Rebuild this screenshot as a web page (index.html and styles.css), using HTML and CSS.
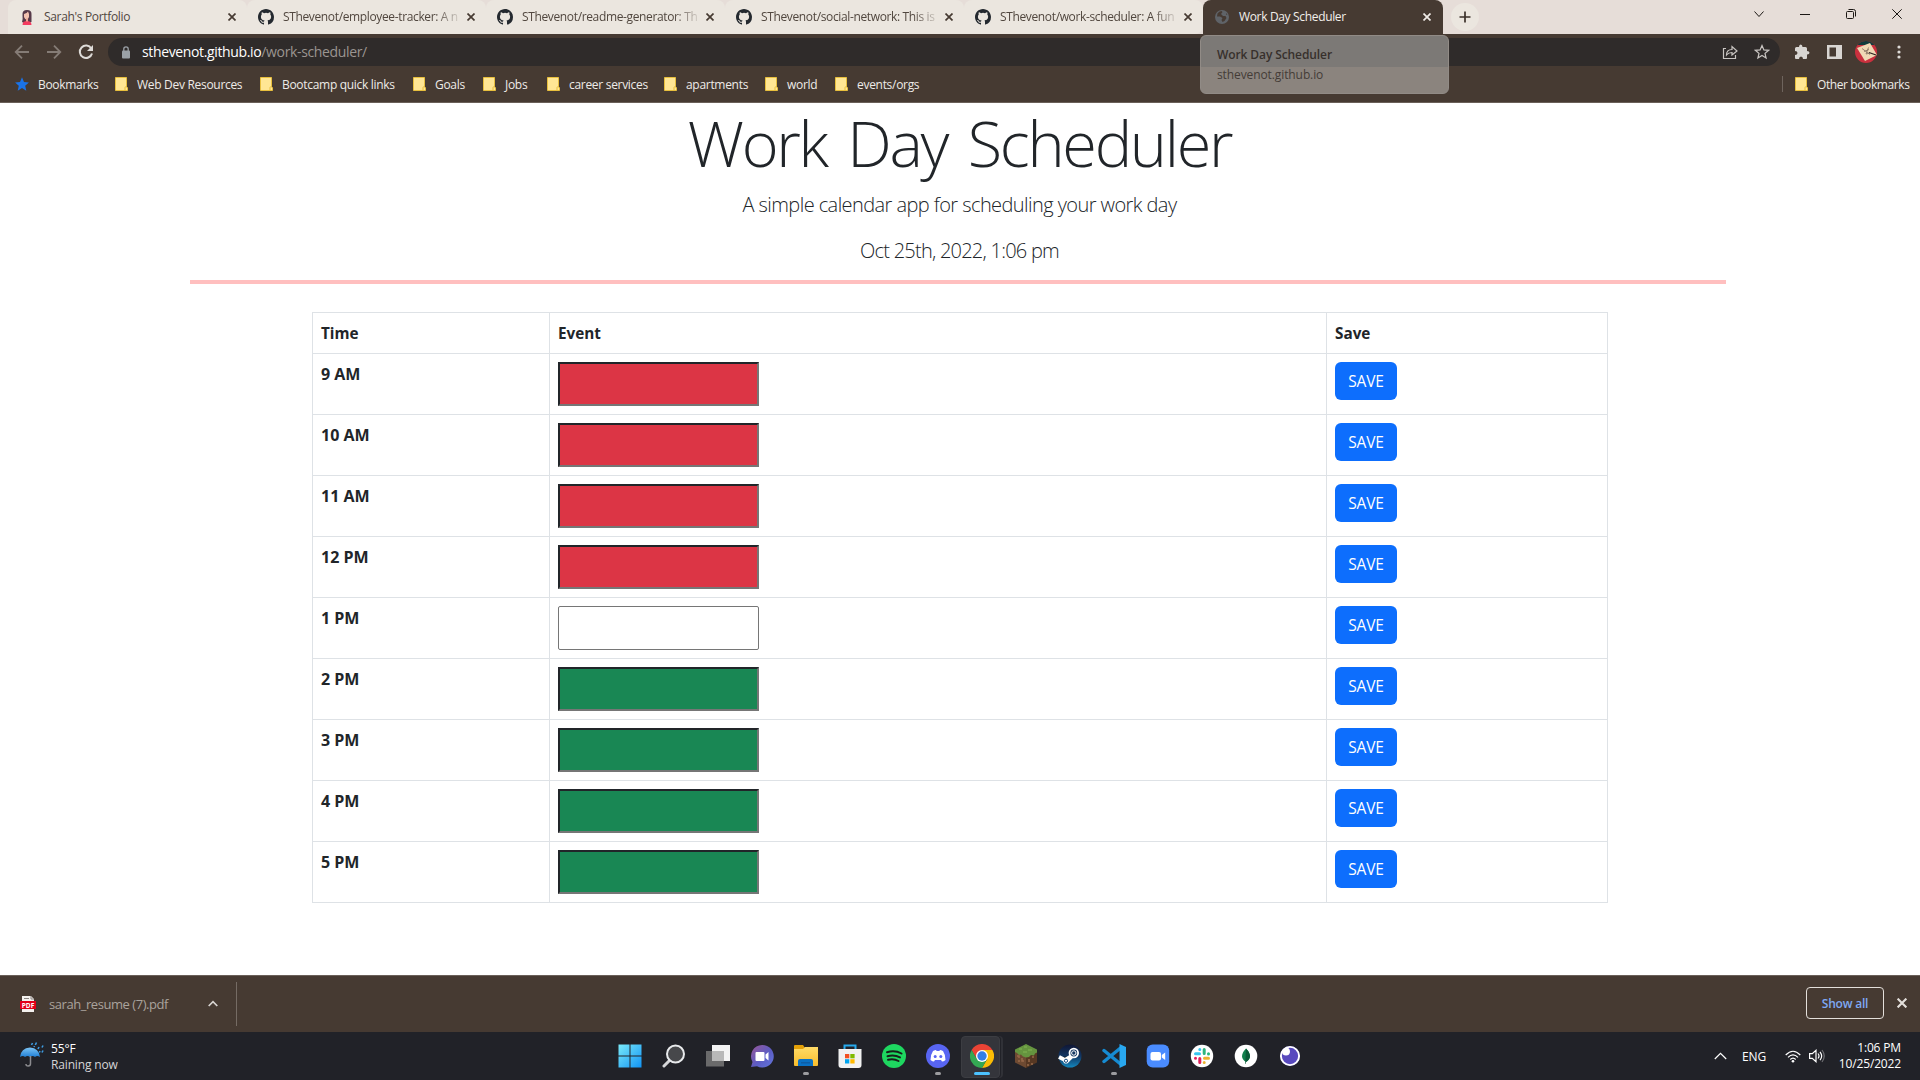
FILE: index.html
```html
<!DOCTYPE html>
<html lang="en">
<head>
<meta charset="utf-8">
<title>Work Day Scheduler</title>
<link rel="stylesheet" href="styles.css">
</head>
<body>
<svg class="defs" width="0" height="0">
  <symbol id="github" viewBox="0 0 16 16"><path fill="#24292f" d="M8 0C3.58 0 0 3.58 0 8c0 3.54 2.29 6.53 5.47 7.59.4.07.55-.17.55-.38 0-.19-.01-.82-.01-1.49-2.01.37-2.53-.49-2.69-.94-.09-.23-.48-.94-.82-1.13-.28-.15-.68-.52-.01-.53.63-.01 1.08.58 1.23.82.72 1.21 1.87.87 2.33.66.07-.52.28-.87.51-1.07-1.78-.2-3.64-.89-3.64-3.95 0-.87.31-1.59.82-2.15-.08-.2-.36-1.02.08-2.12 0 0 .67-.21 2.2.82a7.6 7.6 0 0 1 4 0c1.53-1.04 2.2-.82 2.2-.82.44 1.1.16 1.92.08 2.12.51.56.82 1.27.82 2.15 0 3.07-1.87 3.75-3.65 3.95.29.25.54.73.54 1.48 0 1.07-.01 1.93-.01 2.2 0 .21.15.46.55.38A8 8 0 0 0 16 8c0-4.42-3.58-8-8-8z"/></symbol>
  <symbol id="close" viewBox="0 0 8 8"><path d="M.5.5l7 7M7.500.5l-7 7" stroke="currentColor" stroke-width="1.7" fill="none"/></symbol>
  <symbol id="folder" viewBox="0 0 13 14"><path d="M.5.5h11v9.300l1 1v2.700H.5z" fill="#ffe694" stroke="#e8bf3d"/><path d="M10 13V10.500q0-.7.7-.7h1.100" fill="none" stroke="#e8bf3d"/></symbol>
</svg>

<header class="chrome">
  <div class="tabstrip">
    <div class="tab first"><svg class="fav" viewBox="0 0 16 16"><path d="M3 13q1-3 .5-7Q3 1 8 1t4.500 5v7l-3 1H5z" fill="#573a4a"/><path d="M5 5q3-1 4-2.500l1 2.500v3q-1 2.500-2.500 2.500T5 8z" fill="#f3c2b0"/><path d="M3.500 16q0-4 4.500-4t4.500 4z" fill="#f43b60"/><path d="M7 9.500h2v3H7z" fill="#e9a594"/></svg><span class="tab-title">Sarah's Portfolio</span><svg class="x"><use href="#close"/></svg></div>
    <div class="tab"><svg class="fav"><use href="#github"/></svg><span class="tab-title long">SThevenot/employee-tracker: A n</span><svg class="x"><use href="#close"/></svg></div>
    <div class="tab"><svg class="fav"><use href="#github"/></svg><span class="tab-title long">SThevenot/readme-generator: Th</span><svg class="x"><use href="#close"/></svg></div>
    <div class="tab"><svg class="fav"><use href="#github"/></svg><span class="tab-title long">SThevenot/social-network: This is</span><svg class="x"><use href="#close"/></svg></div>
    <div class="tab last"><svg class="fav"><use href="#github"/></svg><span class="tab-title long">SThevenot/work-scheduler: A fun</span><svg class="x"><use href="#close"/></svg></div>
    <div class="tab active"><svg class="fav" viewBox="0 0 16 16"><circle cx="8" cy="8" r="7" fill="#5f6368"/><path d="M3.500 4.500q1.500-2.500 4-2.500l1 1-1.500 2 2 2h2.500l1 2-2 3-2 1-1-2 1-2-2.500-1.500H3zM12 4l1.500 2-1.500-.5z" fill="#463a32"/></svg><span class="tab-title">Work Day Scheduler</span><svg class="x"><use href="#close"/></svg></div>
    <div class="newtab"><svg width="12" height="12" viewBox="0 0 12 12"><path d="M6 .5v11M.5 6h11" stroke="#3b302a" stroke-width="1.700"/></svg></div>
    <div class="wincontrols">
      <svg width="10" height="10" viewBox="0 0 10 10"><path d="M.5 2.500L5 7.500l4.500-5"/></svg>
      <svg width="10" height="10" viewBox="0 0 10 10"><path d="M0 5.500h10"/></svg>
      <svg width="10" height="10" viewBox="0 0 10 10"><rect x=".5" y="2.500" width="7" height="7" rx="1"/><path d="M2.500.5h5q2 0 2 2v5"/></svg>
      <svg width="10" height="10" viewBox="0 0 10 10"><path d="M.3.3l9.400 9.400M9.700.3L.3 9.700"/></svg>
    </div>
  </div>

  <div class="toolbar">
    <div class="nav">
      <svg width="16" height="16" viewBox="0 0 16 16" class="dim"><path d="M15 8H2M8 1.700L1.700 8 8 14.300"/></svg>
      <svg width="16" height="16" viewBox="0 0 16 16" class="dim"><path d="M1 8h13M8 1.700L14.300 8 8 14.300"/></svg>
      <svg width="16" height="16" viewBox="0 0 16 16"><path d="M13.300 4.500A6.200 6.200 0 1 0 14 9.500" stroke-width="2"/><path d="M15 1v6H9z" fill="#dedbd8" stroke="none"/></svg>
    </div>
    <div class="omnibox">
      <svg width="10" height="13" viewBox="0 0 10 13"><rect x="1" y="4.500" width="8" height="8" rx="1" fill="#9aa0a6"/><path d="M2.800 5V3a2.200 2.200 0 0 1 4.400 0v2" fill="none" stroke="#9aa0a6" stroke-width="1.300"/></svg>
      <div class="url"><b>sthevenot.github.io</b>/work-scheduler/</div>
      <svg class="share" width="16" height="16" viewBox="0 0 16 16"><path d="M4 4.500H1.500v10h12V11M4.500 11q0-5.500 5.500-5.500V2.500L15 7l-5 4V8.500q-3.500 0-5.500 2.500z"/></svg>
      <svg class="star" width="16" height="16" viewBox="0 0 16 16"><path d="M8 1.500l1.900 4.400 4.700.4-3.600 3.100 1.100 4.600L8 11.500 3.900 14 5 9.400 1.400 6.300l4.700-.4z"/></svg>
    </div>
    <svg class="puzzle" width="16" height="16" viewBox="0 0 16 16"><path fill="#d8d5d2" d="M1 4.500q0-1.500 1.500-1.500H5Q5 .5 6.700.5T8.500 3h3q1.500 0 1.500 1.500V7q2.500 0 2.500 1.800T13 10.500V14q0 1-1 1H9q0-2.500-2-2.500T5 15H2q-1 0-1-1v-3q2.500 0 2.500-2T1 7z"/></svg>
    <svg class="panel" width="15" height="14" viewBox="0 0 15 14"><path fill="#d8d5d2" fill-rule="evenodd" d="M0 0h15v14H0zM2.500 2.500v9H9v-9z"/></svg>
    <svg class="avatar" width="22" height="22" viewBox="0 0 22 22"><clipPath id="av"><circle cx="11" cy="11" r="11"/></clipPath><g clip-path="url(#av)"><path fill="#c9303e" d="M0 0h22v22H0z"/><path fill="#123c3c" d="M3 0h16v4H3z"/><path fill="#f0d9b5" d="M2 7L15 2l7 12-12 6z"/><path d="M7 7.500l8 6M13.500 6.500L11 13M9 10.500l5-2M11 13l4-1" stroke="#8d7866" stroke-width=".9" fill="none"/><path d="M14 11.500l7 2.500" stroke="#2c2422" stroke-width="1.300"/></g></svg>
    <svg class="dots" width="4" height="14" viewBox="0 0 4 14" fill="#dedbd8"><circle cx="2" cy="2" r="1.600"/><circle cx="2" cy="7" r="1.600"/><circle cx="2" cy="12" r="1.600"/></svg>
  </div>

  <div class="bookmarks">
    <span class="bm b0"><svg width="14" height="14" viewBox="0 0 14 14"><path fill="#1a73e8" d="M7 .3l2 4.700 4.900.4-3.700 3.300 1.100 5L7 11.100l-4.300 2.600 1.100-5L.1 5.400 5 5z"/></svg>Bookmarks</span>
    <span class="bm b1"><svg><use href="#folder"/></svg>Web Dev Resources</span>
    <span class="bm b2"><svg><use href="#folder"/></svg>Bootcamp quick links</span>
    <span class="bm b3"><svg><use href="#folder"/></svg>Goals</span>
    <span class="bm b4"><svg><use href="#folder"/></svg>Jobs</span>
    <span class="bm b5"><svg><use href="#folder"/></svg>career services</span>
    <span class="bm b6"><svg><use href="#folder"/></svg>apartments</span>
    <span class="bm b7"><svg><use href="#folder"/></svg>world</span>
    <span class="bm b8"><svg><use href="#folder"/></svg>events/orgs</span>
    <span class="bm other"><svg><use href="#folder"/></svg>Other bookmarks</span>
  </div>
  <div class="tooltip"><b>Work Day Scheduler</b><span>sthevenot.github.io</span></div>
</header>

<main class="page">
  <section class="jumbotron">
    <h1>Work Day Scheduler</h1>
    <p class="lead">A simple calendar app for scheduling your work day</p>
    <p class="lead date">Oct 25th, 2022, 1:06 pm</p>
  </section>
  <table class="schedule">
    <thead><tr><th class="time">Time</th><th class="event">Event</th><th>Save</th></tr></thead>
    <tbody>
      <tr><th>9 AM</th><td><input class="past"></td><td><button>SAVE</button></td></tr>
      <tr><th>10 AM</th><td><input class="past"></td><td><button>SAVE</button></td></tr>
      <tr><th>11 AM</th><td><input class="past"></td><td><button>SAVE</button></td></tr>
      <tr><th>12 PM</th><td><input class="past"></td><td><button>SAVE</button></td></tr>
      <tr><th>1 PM</th><td><input class="present"></td><td><button>SAVE</button></td></tr>
      <tr><th>2 PM</th><td><input class="future"></td><td><button>SAVE</button></td></tr>
      <tr><th>3 PM</th><td><input class="future"></td><td><button>SAVE</button></td></tr>
      <tr><th>4 PM</th><td><input class="future"></td><td><button>SAVE</button></td></tr>
      <tr><th>5 PM</th><td><input class="future"></td><td><button>SAVE</button></td></tr>
    </tbody>
  </table>
</main>

<section class="downloads">
  <div class="file">
    <svg width="16" height="16" viewBox="0 0 16 16"><path d="M2 0h9l3 3v13H2z" fill="#f3f0ee"/><path d="M11 0v3h3M4 2.500h5" stroke="#8a8380" fill="none"/><path d="M0 5h16v8H0z" fill="#e2001a"/><text class="pdf" x="8" y="11.500" text-anchor="middle">PDF</text></svg>
    <span>sarah_resume (7).pdf</span>
    <svg class="chev" width="10" height="7" viewBox="0 0 10 7"><path d="M.7 6L5 1.700 9.300 6" fill="none" stroke="#d8d5d2" stroke-width="1.700"/></svg>
  </div>
  <div class="showall">Show all</div>
  <svg class="dismiss" width="10" height="10" viewBox="0 0 8 8"><use href="#close"/></svg>
</section>

<footer class="taskbar">
  <div class="weather">
    <svg width="24" height="26" viewBox="0 0 24 26"><defs><linearGradient id="um" x2="0" y2="1"><stop stop-color="#7cc4f5"/><stop offset="1" stop-color="#1f7fd6"/></linearGradient></defs><path d="M0 15Q1 6 10 5.500 19 6 20 15q-3-2-5 0-2.500-2-5 0-2.500-2-5 0-2-2-5 0z" fill="url(#um)"/><path d="M10.500 14v7.500q0 2.500-2.300 2.500T6 22" stroke="#8b8b8f" stroke-width="1.500" fill="none"/><path d="M12.500 1l-1 2M16.500.5l-1.200 2.500M19 5l-1 2M23 3.500l-1 2M23 8.500l-1 2M20 9l-.7 1.500M14.500 4l-.5 1" stroke="#3d9be0" stroke-width="1.600"/></svg>
    <div><b>55°F</b><span>Raining now</span></div>
  </div>
  <div class="apps">
    <span><svg viewBox="0 0 24 24"><defs><linearGradient id="win" gradientUnits="userSpaceOnUse" x2="24" y2="24"><stop stop-color="#7cecfa"/><stop offset="1" stop-color="#0f92f5"/></linearGradient></defs><path fill="url(#win)" d="M.5.5h11v11H.5zM12.500.5h11v11h-11zM.5 12.500h11v11H.5zM12.500 12.500h11v11h-11z"/></svg></span>
    <span><svg viewBox="0 0 24 24"><path d="M8.500 15.500L2 22" stroke="#d5d7d9" stroke-width="3" stroke-linecap="round"/><circle cx="13.500" cy="10" r="8.500" fill="#47484b" stroke="#e8eaec" stroke-width="2"/></svg></span>
    <span><svg viewBox="0 0 24 24"><path fill="#f3f3f3" d="M6 1h18v16H6z"/><path fill="#777" fill-opacity=".85" d="M0 7h18v15.500H0z"/><path fill="#b8b8b8" d="M6 7h12v10H6z"/></svg></span>
    <span><svg viewBox="0 0 24 24"><defs><linearGradient id="tm" x2="1" y2="1"><stop stop-color="#9a5797"/><stop offset=".55" stop-color="#5b5cc4"/><stop offset="1" stop-color="#6478dd"/></linearGradient></defs><path fill="url(#tm)" d="M12 1a11.300 11.300 0 1 1-5 21.200L1 23l1.500-5A11.300 11.300 0 0 1 12 1z"/><rect x="5.500" y="8" width="9" height="9" rx="1" fill="#fff"/><path fill="#fff" d="M15.500 10.500l3-2.500v8.500l-3-2.500z"/></svg></span>
    <span class="run"><svg viewBox="0 0 24 24"><defs><linearGradient id="fo" x2="0" y2="1"><stop stop-color="#ffdb67"/><stop offset="1" stop-color="#f8bd2c"/></linearGradient></defs><path fill="#e3a008" d="M0 2q0-1 1-1h8l2 3v4H0z"/><path fill="url(#fo)" d="M0 5h9l2-2h13v18q0 1-1 1H1q-1 0-1-1z"/><path fill="#0a71c4" d="M4 22v-5q0-2 2-2h11q2 0 2 2v5z"/><path fill="#0d5da5" d="M7 18h9v1.500H7z"/></svg></span>
    <span><svg viewBox="0 0 24 24"><path d="M6.500 7V1.500h11V7" fill="none" stroke="#27a9ec" stroke-width="2"/><path fill="#f1f1f1" d="M.5 5h23v16q0 3-3 3h-17q-3 0-3-3z"/><path fill="#f25022" d="M7 10h4.300v4.300H7z"/><path fill="#7fba00" d="M12.300 10h4.300v4.300h-4.300z"/><path fill="#00a4ef" d="M7 15.200h4.300v4.300H7z"/><path fill="#ffb900" d="M12.300 15.200h4.300v4.300h-4.300z"/></svg></span>
    <span><svg viewBox="0 0 24 24"><circle cx="12" cy="12" r="12" fill="#1ed760"/><path d="M5 8.200q8-2.300 14.500 1.300M5.500 12.200q7-1.700 12.500 1.200M6 15.800q6-1.300 10.500 1.200" fill="none" stroke="#17201a" stroke-width="2" stroke-linecap="round"/></svg></span>
    <span class="run"><svg viewBox="0 0 24 24"><circle cx="12" cy="12" r="12" fill="#5865f2"/><path fill="#fff" d="M7 7q2-1 3-1l.6 1h2.800l.6-1q1 0 3 1 2.700 4 2.500 9-2 1.500-3.500 1.500l-1-1.500H9l-1 1.500q-1.500 0-3.500-1.500Q4.300 11 7 7z"/><circle cx="9.200" cy="12.500" r="1.500" fill="#5865f2"/><circle cx="14.800" cy="12.500" r="1.500" fill="#5865f2"/></svg></span>
    <span class="current"><svg viewBox="0 0 24 24"><path fill="#ea4335" d="M1.600 6A12 12 0 0 1 22.400 6H12L6.800 15z"/><path fill="#fbbc05" d="M22.400 6A12 12 0 0 1 12 24l5.200-9L12 6z"/><path fill="#34a853" d="M1.600 6A12 12 0 0 0 12 24l5.200-9H6.800z"/><circle cx="12" cy="12" r="6" fill="#fff"/><circle cx="12" cy="12" r="4.700" fill="#337ee8"/></svg></span>
    <span><svg viewBox="0 0 24 24"><path fill="#6e4a32" d="M1 6l11 5v13L1 18.500z"/><path fill="#573823" d="M23 6l-11 5v13l11-5.500z"/><path fill="#65943f" d="M12 0l11 5.500v3l-2 1-1 2-3-.5-2 2-3 .5-3-1-2-2-2 .5-2-2-2-1V5.500z"/><path d="M5 5h3M10 3h3M14 6h4M9 8h4" stroke="#82b453"/><path d="M3 12h2v2M8 14v3h2M4 17h2M15 15v3M18 13h2M17 20h2M14 20v2" stroke="#98694a" fill="none" stroke-width="1.500"/></svg></span>
    <span><svg viewBox="0 0 24 24"><defs><linearGradient id="st" x2="0" y2="1"><stop stop-color="#101634"/><stop offset=".5" stop-color="#123663"/><stop offset="1" stop-color="#1487bd"/></linearGradient></defs><circle cx="12" cy="12" r="11.500" fill="url(#st)"/><path d="M1 13l6 3 6-3.500M9 17l5-5" stroke="#fff" stroke-width="4"/><circle cx="15.800" cy="9" r="4.300" fill="#173a64" stroke="#fff" stroke-width="1.800"/><circle cx="15.800" cy="9" r="2.200" fill="none" stroke="#fff"/><circle cx="8" cy="16.800" r="2.800" fill="#fff"/><circle cx="8" cy="16.800" r="1.600" fill="none" stroke="#1a4e81"/></svg></span>
    <span class="run"><svg viewBox="0 0 24 24"><path d="M2 6.500L18.500 20M2 17.500L18.500 4" stroke="#168bd2" stroke-width="3.400" stroke-linecap="round"/><path fill="#29a8f0" d="M17.500 0L24 3v18l-6.500 3z"/></svg></span>
    <span><svg viewBox="0 0 24 24"><rect x=".7" y=".5" width="22.500" height="23" rx="6" fill="#4a8cff"/><rect x="4.500" y="8" width="10.500" height="8.500" rx="2" fill="#fff"/><path fill="#fff" d="M15.800 11l3.400-2.500v7.500l-3.400-2.500z"/></svg></span>
    <span><svg viewBox="0 0 24 24"><circle cx="12" cy="12" r="11.200" fill="#fff"/><g fill="none" stroke-width="3" stroke-linecap="round"><path stroke="#36c5f0" d="M5.500 9.800h4M9.800 5.500v.1"/><path stroke="#2eb67d" d="M14.200 5.500v4M18.500 9.800v.1"/><path stroke="#ecb22e" d="M14.500 14.200h4M14.200 18.500v.1"/><path stroke="#e01e5a" d="M9.800 14.500v4M5.500 14.200v.1"/></g></svg></span>
    <span><svg viewBox="0 0 24 24"><circle cx="12" cy="12" r="11.300" fill="#fff"/><path fill="#10804c" d="M12 4.500q8 8.500 0 13.500-8-5 0-13.500z"/><path fill="#0b5b38" d="M12 4.500q8 8.500 0 13.500v1.800h-.7V18z"/></svg></span>
    <span><svg viewBox="0 0 24 24"><circle cx="12" cy="12" r="9.900" fill="#5849be"/><path fill="#fff" d="M4 8.500Q6 4 9 3.500q3 .5 3 4.500-.5 3.500-4 3.500T4 8.500z"/><circle cx="12" cy="12" r="9.100" fill="none" stroke="#fff" stroke-width="1.900"/></svg></span>
  </div>
  <div class="tray">
    <svg class="up" width="13" height="8" viewBox="0 0 13 8"><path d="M.8 7l5.700-5.700L12.200 7"/></svg>
    <span class="lang">ENG</span>
    <svg class="wifi" width="16" height="13" viewBox="0 0 16 13"><path d="M.7 5Q8-2.500 15.300 5M3 7.300q5-5 10 0M5.300 9.500q2.700-2.600 5.400 0"/><circle cx="8" cy="11.200" r="1.300" fill="#fff" stroke="none"/></svg>
    <svg class="vol" width="16" height="14" viewBox="0 0 16 14"><path d="M.6 4.700h2.700L7 1.300v11.400L3.300 9.300H.6zM9 4.500q2 2.500 0 5M11 2.800q3.300 4.200 0 8.400"/><path d="M13 1q4.500 6 0 12" opacity=".35"/></svg>
    <div class="clock"><span>1:06 PM</span><span>10/25/2022</span></div>
  </div>
</footer>
</body>
</html>
```
FILE: styles.css
```css
* { box-sizing: border-box; }
body { margin: 0; width: 1920px; height: 1080px; overflow: hidden; display: flex; flex-direction: column; background: #fff; color: #212529; font-family: "Open Sans", "Noto Sans", sans-serif; }
.defs { position: absolute; }
svg { display: block; flex: none; }

/* browser frame */
.chrome { position: relative; height: 103px; background: #463a32; border-bottom: 1px solid #6a6059; font-size: 12px; letter-spacing: -.3px; }
.tabstrip { height: 34px; display: flex; background: #e6ddd8; padding-left: 8px; }
.tab { position: relative; width: 239px; height: 34px; display: flex; align-items: center; background: #ebe6df; color: #51473f; padding: 0 11px 0 12px; border-radius: 8px 8px 0 0; }
.tab:not(.last):not(.active)::after { content: ""; position: absolute; right: -1px; top: 8px; width: 1px; height: 19px; background: #8d857f; }
.tab.last { border-radius: 8px 8px 8px 0; }
.tab.active { width: 240px; background: #463a32; color: #f3efeb; }
.fav { width: 16px; height: 16px; margin-left: -1px; }
.tab-title { flex: none; width: 177px; margin-left: 9px; padding-bottom: 1px; white-space: nowrap; letter-spacing: -.34px; }
.tab-title.long { letter-spacing: -.36px; -webkit-mask-image: linear-gradient(90deg, #000 152px, transparent 180px); mask-image: linear-gradient(90deg, #000 152px, transparent 180px); }
.x { width: 8px; height: 8px; margin-left: 7px; color: #463a32; }
.active .x { color: #f0ebe7; }
.newtab { width: 28px; height: 28px; border-radius: 50%; margin: 3px 0 0 8px; background: #ebe6df; display: grid; place-items: center; }
.wincontrols { margin-left: auto; display: flex; gap: 36px; padding: 9px 18px 0 0; }
.wincontrols svg { fill: none; stroke: #1c1815; }

.toolbar { height: 36px; display: flex; align-items: center; padding-left: 14px; }
.nav { display: flex; gap: 16px; width: 94px; }
.nav svg { fill: none; stroke: #dedbd8; stroke-width: 1.8; }
.nav svg.dim { stroke: #857c76; }
.omnibox { width: 1672px; height: 28px; border-radius: 14px; background: #2f2b2a; display: flex; align-items: center; padding: 0 10px 0 13px; }
.url { margin-left: 11px; padding-bottom: 1px; font-size: 14px; letter-spacing: -.36px; color: #9b9591; flex: 1; }
.url b { font-weight: 400; color: #fff; }
.omnibox .share, .omnibox .star { fill: none; stroke: #c9c5c2; stroke-width: 1.2; }
.star { margin-left: 16px; }
.puzzle { margin-left: 14px; }
.panel { margin-left: 17px; }
.avatar { margin-left: 13px; }
.dots { margin-left: 20px; }

.bookmarks { height: 28px; display: flex; align-items: center; color: #eeebe8; padding-left: 15px; }
.bm { display: flex; align-items: center; gap: 10px; white-space: nowrap; }
.bm svg { width: 13px; height: 14px; margin-right: -1px; }
.b0 { width: 100px; }
.b0 svg { width: 14px; }
.b1 { width: 145px; }
.b2 { width: 153px; }
.b3 { width: 70px; }
.b4 { width: 64px; }
.b5 { width: 117px; }
.b6 { width: 101px; }
.b7 { width: 70px; }
.other { margin-left: auto; width: 138px; padding-left: 12px; border-left: 1px solid #6e645d; height: 16px; letter-spacing: -.4px; }
.tooltip { position: absolute; z-index: 2; left: 1200px; top: 35px; width: 249px; height: 59px; border-radius: 6px; border: 1px solid #918b86; background: linear-gradient(#7c7976 0 31px, #8b847e 31px); padding: 9px 16px; color: #443c37; display: flex; flex-direction: column; line-height: 20px; letter-spacing: -.1px; }
.tooltip b { font-weight: 600; color: #37302c; }

/* scheduler page */
.page { height: 872px; }
.jumbotron { width: 1536px; height: 181px; margin: 0 0 0 190px; padding-left: 3px; border-bottom: 4px solid #ffbfbf; text-align: center; }
h1 { margin: 0; font-size: 63px; font-weight: 300; line-height: 77px; padding-top: 1px; letter-spacing: -2.3px; word-spacing: 6.5px; }
.lead { margin: 0; font-size: 20px; font-weight: 300; line-height: 30px; padding-top: 9px; letter-spacing: -.57px; }
.lead.date { padding-top: 16px; letter-spacing: -.76px; }
.schedule { margin: 28px 0 0 312px; width: 1296px; table-layout: fixed; border-collapse: separate; border-spacing: 0; border: solid #dee2e6; border-width: 1px 0 0 1px; font-size: 16px; line-height: 24px; }
.schedule th, .schedule td { height: 61px; padding: 8px; vertical-align: top; text-align: left; border: solid #dee2e6; border-width: 0 1px 1px 0; }
.schedule th { font-size: 16px; font-weight: 700; }
.schedule thead th { height: 41px; font-size: 15.3px; }
.schedule .time { width: 237px; }
.schedule .event { width: 777px; }
input { display: block; width: 201px; height: 44px; margin: 0; }
.past { background: #dc3545; border: 2px solid; border-color: #212529 #767676 #767676 #212529; }
.future { background: #198754; border: 2px solid; border-color: #212529 #767676 #767676 #212529; }
.present { background: #fff; border: 1px solid #767676; border-radius: 2px; }
button { display: block; width: 62px; height: 38px; border: 0; border-radius: 6px; padding: 0; background: #0d6efd; color: #fff; font: 15.5px "Open Sans", sans-serif; letter-spacing: -.2px; }

/* download shelf */
.downloads { height: 57px; background: #463a32; border-top: 1px solid #6a6059; display: flex; align-items: center; padding: 0 13px 2px 20px; }
.file { height: 44px; width: 217px; margin-top: 1px; border-right: 1px solid #756b64; display: flex; align-items: center; color: #aaa39d; font-size: 13px; letter-spacing: -.45px; }
.file span { width: 159px; margin-left: 13px; }
.pdf { font: 700 6.500px "Open Sans", sans-serif; letter-spacing: 0; fill: #fff; }
.showall { margin-left: auto; width: 78px; height: 32px; border: 1px solid #e3dfdb; border-radius: 4px; color: #7fa9f4; font-size: 12px; font-weight: 600; display: grid; place-items: center; letter-spacing: -.2px; }
.dismiss { margin-left: 13px; color: #e3dfdb; }

/* taskbar */
.taskbar { height: 48px; background: #212228; display: flex; color: #fff; font-size: 12px; letter-spacing: -.15px; }
.weather { display: flex; padding: 9px 0 0 20px; width: 608px; gap: 7px; line-height: 16px; }
.weather svg { margin-top: 1px; }
.weather b, .weather span { display: block; font-weight: 400; }
.weather span { color: #d5d5d7; }
.apps { display: flex; }
.apps span { position: relative; width: 44px; height: 48px; display: grid; place-items: center; }
.apps svg { width: 24px; height: 24px; position: relative; }
.run::after { content: ""; position: absolute; left: 19px; bottom: 5px; width: 6px; height: 3px; border-radius: 2px; background: #9c9c9f; }
.current::before { content: ""; position: absolute; left: 1px; top: 4px; width: 37px; height: 40px; border-radius: 4px; background: #34353b; border: 1px solid #3c3d42; box-shadow: 1px 0 0 #212228, 3px 0 0 #303137; }
.current::after { content: ""; position: absolute; left: 14px; bottom: 5px; width: 16px; height: 3px; border-radius: 2px; background: #4cc2ff; }
.tray { margin-left: auto; display: flex; align-items: center; padding-right: 19px; }
.tray svg { fill: none; stroke: #fff; stroke-width: 1.2; }
.lang { width: 25px; margin-left: 15px; }
.wifi { margin-left: 18px; }
.vol { margin-left: 8px; }
.clock { width: 76px; text-align: right; line-height: 16px; }
.clock span { display: block; }
```
